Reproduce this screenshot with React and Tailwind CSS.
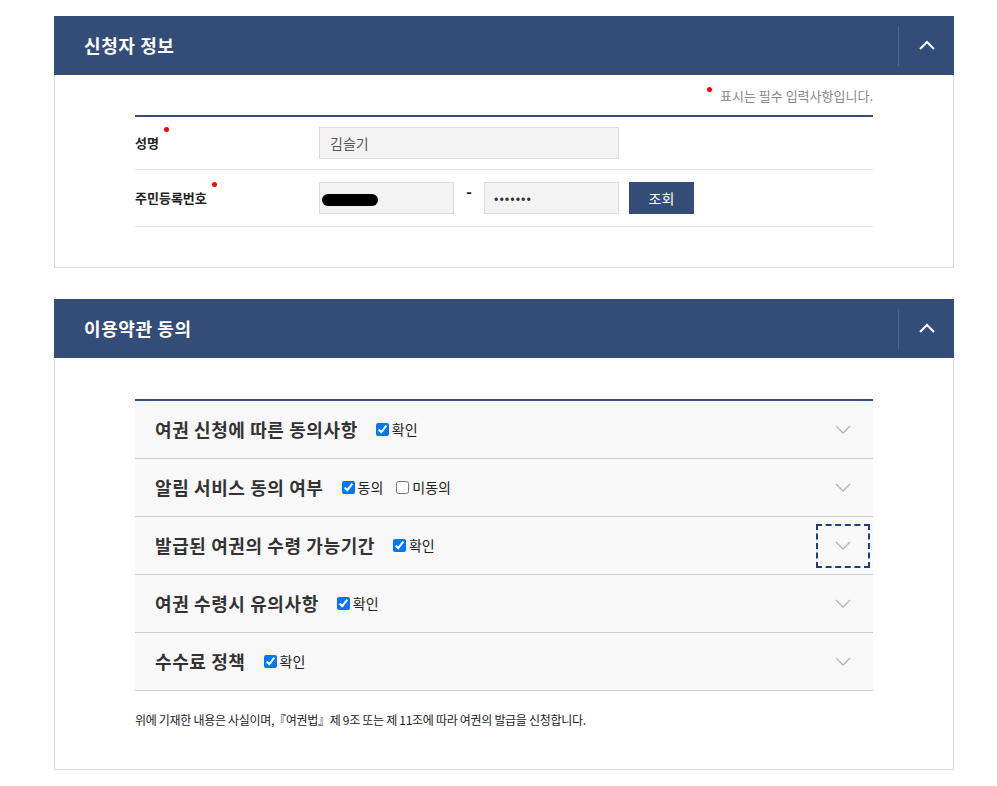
import React from "react";

const font = { fontFamily: '"Noto Sans CJK KR", "Noto Sans", sans-serif' };

function UpChevron() {
  return (
    <svg width="16" height="10" viewBox="0 0 16 10" fill="none">
      <path d="M1 9 L8 2 L15 9" stroke="white" strokeWidth="2" />
    </svg>
  );
}

function DownChevron() {
  return (
    <svg width="16" height="9" viewBox="0 0 16 9" fill="none">
      <path d="M1 1 L8 8 L15 1" stroke="#b5b5b5" strokeWidth="1.3" />
    </svg>
  );
}

function Header({ title }) {
  return (
    <div className="flex h-[59px] items-center bg-[#344d78]">
      <h2 className="flex-1 pl-[30px] text-[18px] font-bold tracking-[0.6px] text-white">{title}</h2>
      <div className="h-[40px] w-px bg-[#4d6590]" />
      <div className="flex w-[55px] items-center justify-center pb-[2px]">
        <UpChevron />
      </div>
    </div>
  );
}

function Dot({ className = "" }) {
  return <span className={"inline-block h-[5px] w-[5px] rounded-full bg-[#ff0000] " + className} />;
}

function Check({ checked = true, label }) {
  return (
    <label className="flex items-center gap-[3px] text-[14px] text-[#222]">
      <input type="checkbox" defaultChecked={checked} className="m-0 h-[13px] w-[13px] accent-[#0075ff]" />
      <span>{label}</span>
    </label>
  );
}

function AccRow({ title, children, focused }) {
  return (
    <div className="flex h-[58px] items-center border-b border-[#cccccc] bg-[#f8f8f8] pl-[20px] pr-[3px]">
      <span className="text-[18px] font-bold tracking-[0.6px] text-[#333]">{title}</span>
      <div className="ml-[18px] flex items-center gap-[13px]">{children}</div>
      <div className="flex-1" />
      <div
        className={
          "flex h-[44px] w-[54px] items-center justify-center " +
          (focused ? "border-2 border-dashed border-[#1f3e75]" : "border-2 border-transparent")
        }
      >
        <DownChevron />
      </div>
    </div>
  );
}

export default function App() {
  return (
    <div className="min-h-[786px] bg-white pt-[16px]" style={font}>
      <div className="ml-[54px] w-[900px]">
        {/* Section 1 */}
        <section>
          <Header title="신청자 정보" />
          <div className="border-x border-b border-[#dddddd] px-[80px] pb-[40px] pt-[10px]">
            <div className="flex items-start justify-end pr-0 text-[13px] text-[#888]">
              <Dot className="mr-[8px] mt-[2px]" />
              <span className="leading-[22px]">표시는 필수 입력사항입니다.</span>
            </div>
            <div className="mt-[8px] border-t-2 border-[#344d78]">
              <div className="flex h-[53px] items-center border-b border-[#e6e6e6]">
                <div className="relative w-[184px] text-[13px] font-bold text-[#222]">
                  <span className="relative">
                    성명
                    <Dot className="absolute -right-[10px] -top-[6px]" />
                  </span>
                </div>
                <div className="flex h-[32px] w-[300px] items-center border border-[#dddddd] bg-[#f3f3f3] px-[10px] text-[14px] text-[#555]">
                  김슬기
                </div>
              </div>
              <div className="flex h-[57px] items-center border-b border-[#e6e6e6]">
                <div className="w-[184px] text-[13px] font-bold text-[#222]">
                  <span className="relative">
                    주민등록번호
                    <Dot className="absolute -right-[10px] -top-[6px]" />
                  </span>
                </div>
                <div className="flex h-[32px] w-[135px] items-center border border-[#dddddd] bg-[#f3f3f3] px-[2px]">
                  <span className="mt-[3px] inline-block h-[12px] w-[56px] rounded-[6px] bg-black" />
                </div>
                <div className="flex w-[30px] justify-center self-center pb-[14px] text-[16px] font-bold text-[#222]">-</div>
                <div className="flex h-[32px] w-[135px] items-center border border-[#dddddd] bg-[#f3f3f3] px-[9px] text-[13px] tracking-[1px] text-[#333]">
                  •••••••
                </div>
                <button className="ml-[10px] flex h-[32px] w-[65px] items-center justify-center bg-[#344d78] text-[14px] text-white">
                  조회
                </button>
              </div>
            </div>
          </div>
        </section>

        {/* Section 2 */}
        <section className="mt-[31px]">
          <Header title="이용약관 동의" />
          <div className="border-x border-b border-[#dddddd] px-[80px] pb-[40px] pt-[41px]">
            <div className="border-t-2 border-[#344d78]">
              <AccRow title="여권 신청에 따른 동의사항">
                <Check label="확인" />
              </AccRow>
              <AccRow title="알림 서비스 동의 여부">
                <Check label="동의" />
                <Check label="미동의" checked={false} />
              </AccRow>
              <AccRow title="발급된 여권의 수령 가능기간" focused>
                <Check label="확인" />
              </AccRow>
              <AccRow title="여권 수령시 유의사항">
                <Check label="확인" />
              </AccRow>
              <AccRow title="수수료 정책">
                <Check label="확인" />
              </AccRow>
            </div>
            <p className="mt-[20px] text-[12px] tracking-[-0.3px] text-[#222]">
              위에 기재한 내용은 사실이며,『여권법』제 9조 또는 제 11조에 따라 여권의 발급을 신청합니다.
            </p>
          </div>
        </section>
      </div>
    </div>
  );
}
